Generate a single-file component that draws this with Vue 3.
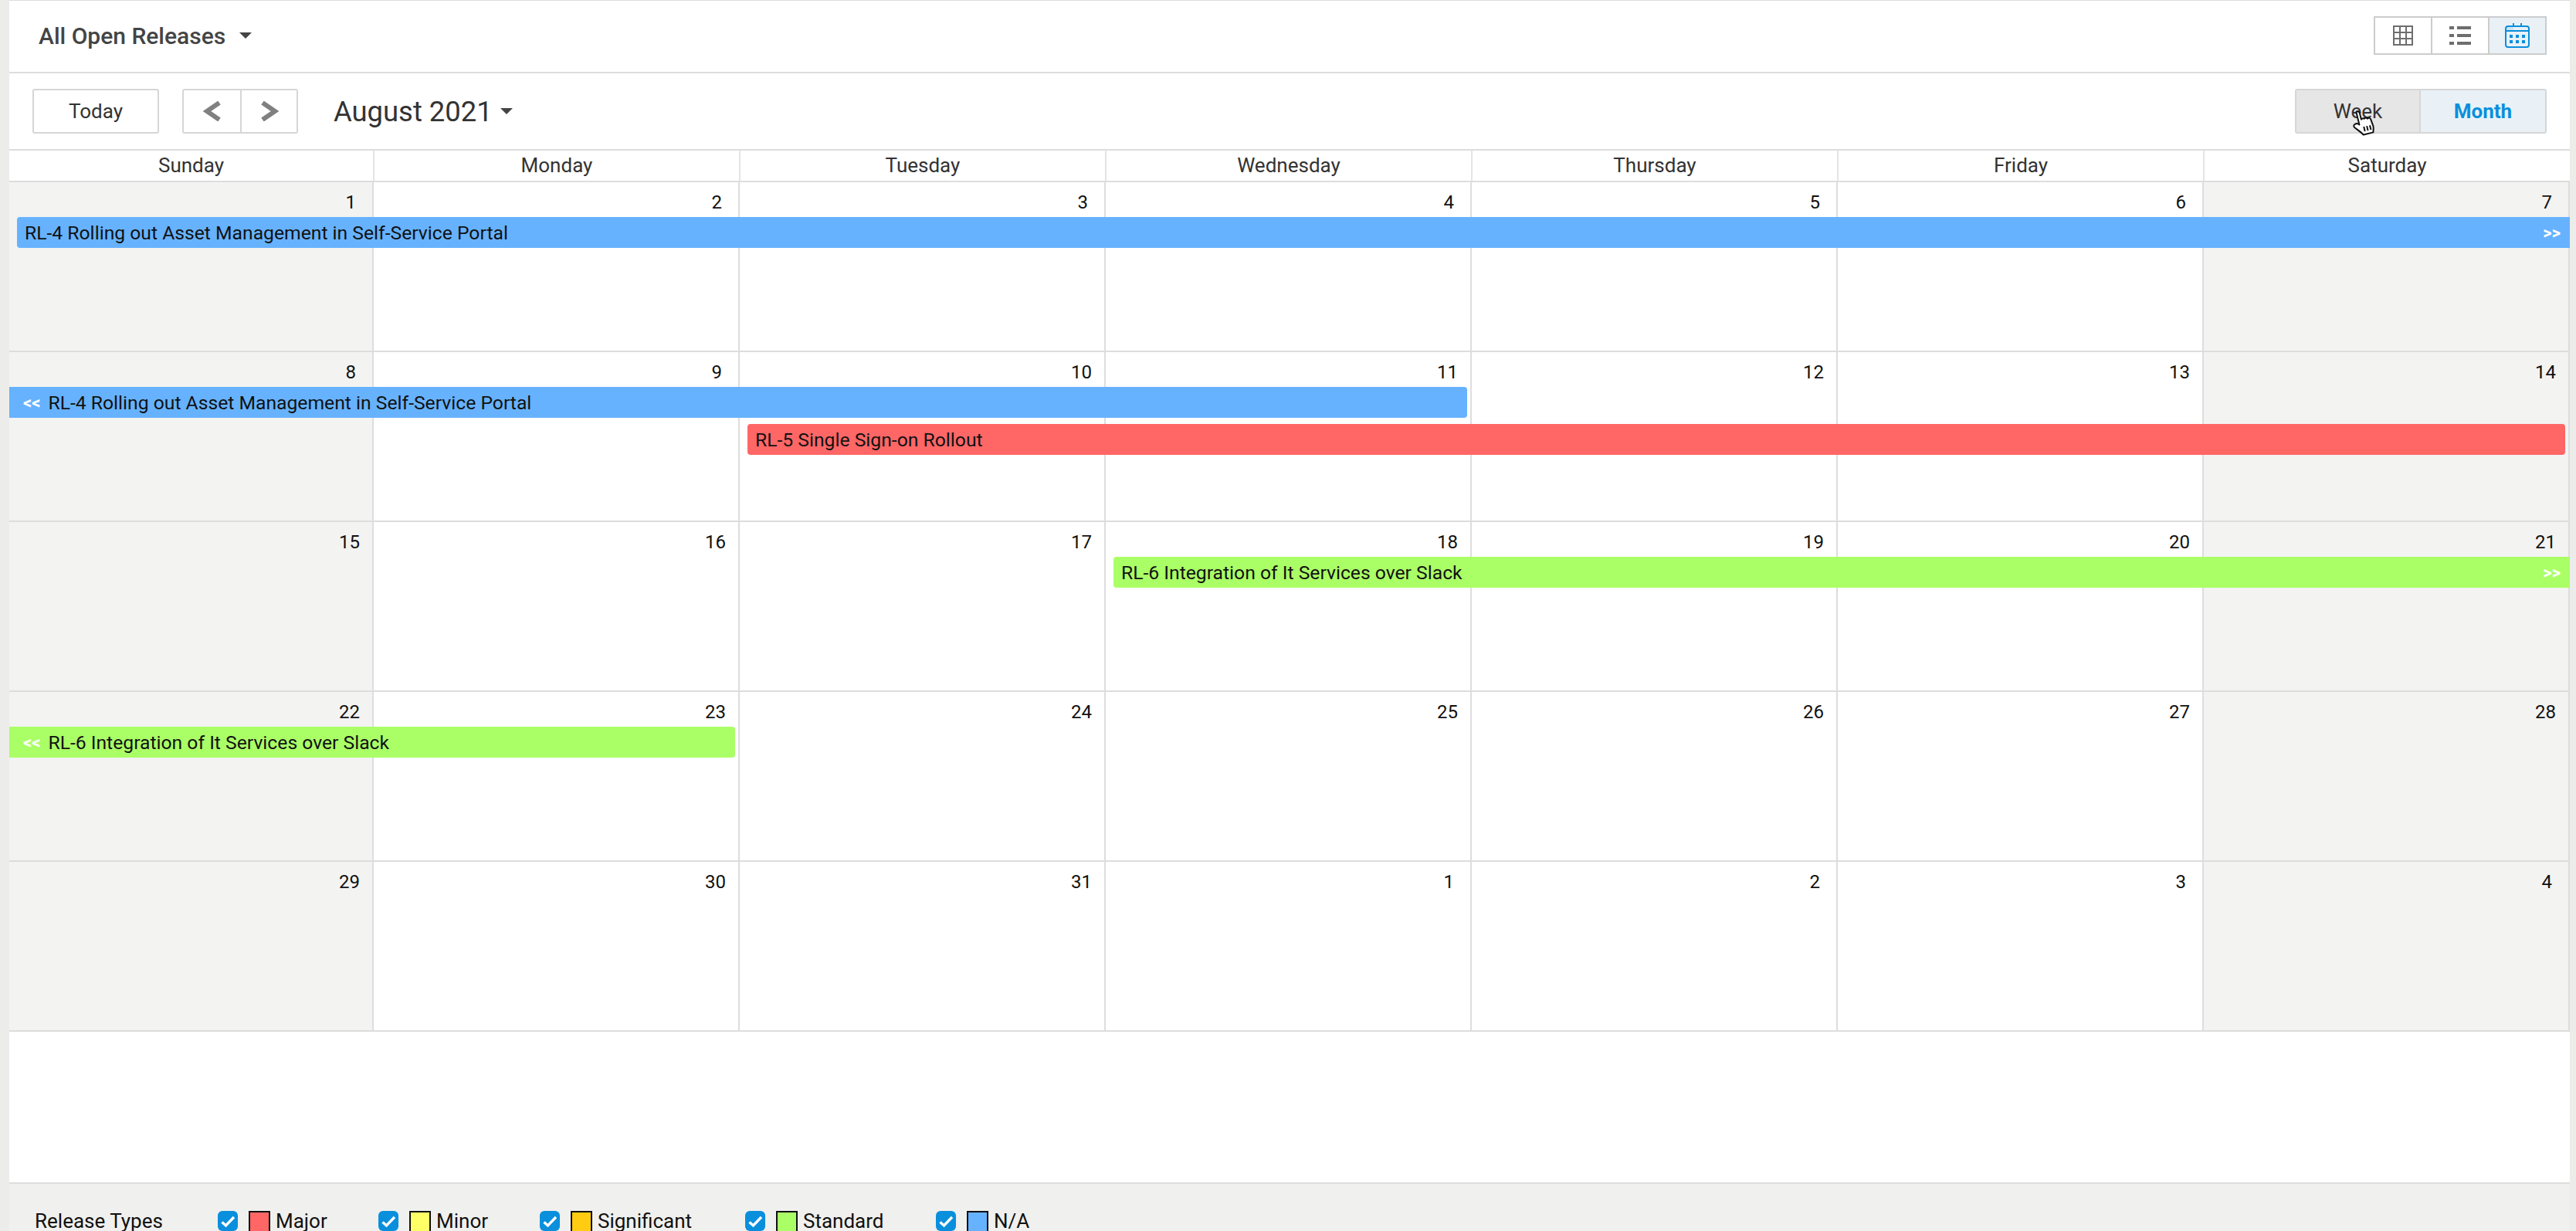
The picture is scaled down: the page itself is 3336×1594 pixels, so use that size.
<script setup>
const days = ['Sunday', 'Monday', 'Tuesday', 'Wednesday', 'Thursday', 'Friday', 'Saturday']

const BLUE = '#66b2ff'
const RED = '#ff6666'
const GREEN = '#aaff66'

const RL4 = 'RL-4 Rolling out Asset Management in Self-Service Portal'
const RL5 = 'RL-5 Single Sign-on Rollout'
const RL6 = 'RL-6 Integration of It Services over Slack'

const weeks = [
  {
    dates: [1, 2, 3, 4, 5, 6, 7],
    events: [{ title: RL4, color: BLUE, from: 1, to: 8, row: 2, kind: 'open-end' }]
  },
  {
    dates: [8, 9, 10, 11, 12, 13, 14],
    events: [
      { title: RL4, color: BLUE, from: 1, to: 5, row: 2, kind: 'open-start' },
      { title: RL5, color: RED, from: 3, to: 8, row: 3, kind: 'closed' }
    ]
  },
  {
    dates: [15, 16, 17, 18, 19, 20, 21],
    events: [{ title: RL6, color: GREEN, from: 4, to: 8, row: 2, kind: 'open-end' }]
  },
  {
    dates: [22, 23, 24, 25, 26, 27, 28],
    events: [{ title: RL6, color: GREEN, from: 1, to: 3, row: 2, kind: 'open-start' }]
  },
  { dates: [29, 30, 31, 1, 2, 3, 4], events: [] }
]

const legend = [
  { label: 'Major', color: '#ff6666', width: 208 },
  { label: 'Minor', color: '#ffff66', width: 209 },
  { label: 'Significant', color: '#ffcc11', width: 266 },
  { label: 'Standard', color: '#aaff66', width: 247 },
  { label: 'N/A', color: '#66b2ff', width: 120 }
]
</script>

<template>
  <div class="page">
    <header class="topbar">
      <div class="filter">
        <span>All Open Releases</span>
        <i class="caret small"></i>
      </div>
      <div class="view-switch">
        <button class="view-btn">
          <svg width="26" height="26" viewBox="0 0 26 26" fill="none" stroke="#6e6e6e" stroke-width="2">
            <rect x="1" y="1" width="24" height="24" />
            <path d="M9 1v24M17 1v24M1 9h24M1 17h24" />
          </svg>
        </button>
        <button class="view-btn">
          <svg width="28" height="24" viewBox="0 0 28 24" fill="#6e6e6e">
            <rect x="0" y="0" width="6" height="4" />
            <rect x="10" y="0" width="18" height="4" />
            <rect x="0" y="10" width="6" height="4" />
            <rect x="10" y="10" width="18" height="4" />
            <rect x="0" y="20" width="6" height="4" />
            <rect x="10" y="20" width="18" height="4" />
          </svg>
        </button>
        <button class="view-btn active">
          <svg width="32" height="32" viewBox="0 0 32 32" fill="none">
            <rect x="1" y="5" width="10" height="5" fill="#cfe4f4" />
            <rect x="1" y="4" width="30" height="27" rx="3" stroke="#0a8fdc" stroke-width="2" />
            <path d="M1 10h30" stroke="#0a8fdc" stroke-width="2" />
            <path d="M11 0v5M21 0v5" stroke="#0a8fdc" stroke-width="2" />
            <g fill="#0a8fdc">
              <rect x="6" y="15" width="4" height="4" />
              <rect x="14" y="15" width="4" height="4" />
              <rect x="22" y="15" width="4" height="4" />
              <rect x="6" y="22" width="4" height="4" />
              <rect x="14" y="22" width="4" height="4" />
              <rect x="22" y="22" width="4" height="4" />
            </g>
          </svg>
        </button>
      </div>
    </header>

    <div class="navbar">
      <button class="today">Today</button>
      <div class="arrows">
        <button class="arrow">
          <svg width="24" height="26" viewBox="0 0 24 26" fill="none" stroke="#808080" stroke-width="6">
            <path d="M21 2 5 13l16 11" />
          </svg>
        </button>
        <button class="arrow">
          <svg width="24" height="26" viewBox="0 0 24 26" fill="none" stroke="#808080" stroke-width="6">
            <path d="M3 2l16 11L3 24" />
          </svg>
        </button>
      </div>
      <div class="month-title">
        <span>August 2021</span>
        <i class="caret"></i>
      </div>
      <div class="range">
        <button class="range-btn week">
          Week
          <svg class="hand" width="32" height="36" viewBox="0 0 30 36">
            <g transform="rotate(-14 15 18)">
              <path
                d="M9 2c2-1 4 0 4 3v8c1-1 3-1 4 0 1-1 3-1 4 1 2-1 4 0 4 2l1 9c0 3-1 5-2 8H11c-2-4-5-7-9-12-1-2 0-4 2-4 2-1 3 0 5 2V5c0-1 0-2 0-3z"
                fill="#fff"
                stroke="#111"
                stroke-width="2"
                stroke-linejoin="round"
              />
              <path d="M14 23v6M18 23v6M22 23v6" stroke="#111" stroke-width="2" fill="none" />
            </g>
          </svg>
        </button>
        <button class="range-btn month">Month</button>
      </div>
    </div>

    <div class="day-head">
      <div v-for="day in days" :key="day" class="day-name">{{ day }}</div>
    </div>

    <div class="weeks">
      <div v-for="(week, w) in weeks" :key="w" class="week-row">
        <div
          v-for="(date, d) in week.dates"
          :key="d"
          class="cell"
          :class="{ weekend: d === 0 || d === 6, wide: date > 9 }"
          :style="{ gridColumn: d + 1 }"
        >
          {{ date }}
        </div>
        <div
          v-for="event in week.events"
          :key="event.title"
          class="bar"
          :class="event.kind"
          :style="{ gridColumn: event.from + ' / ' + event.to, gridRow: event.row, background: event.color }"
        >
          <span v-if="event.kind === 'open-start'" class="more">&lt;&lt;</span>
          <span class="bar-title">{{ event.title }}</span>
          <span v-if="event.kind === 'open-end'" class="more end">&gt;&gt;</span>
        </div>
      </div>
    </div>

    <footer class="legend">
      <span class="legend-title">Release Types</span>
      <label v-for="item in legend" :key="item.label" class="legend-item" :style="{ width: item.width + 'px' }">
        <span class="check">
          <svg width="26" height="26" viewBox="0 0 26 26" fill="none" stroke="#fff" stroke-width="3.4">
            <path d="M5.5 14.5l5 4.5L21 8" />
          </svg>
        </span>
        <span class="swatch" :style="{ background: item.color }"></span>
        <span class="legend-label">{{ item.label }}</span>
      </label>
    </footer>
  </div>
</template>

<style>
html,
body {
  margin: 0;
  overflow: hidden;
  background: #ececea;
}
</style>

<style scoped>
.page {
  width: 3316px;
  height: 1594px;
  margin-left: 12px;
  background: #fff;
  font-family: Roboto, sans-serif;
  color: #333;
  display: flex;
  flex-direction: column;
  overflow: hidden;
}

button {
  font-family: inherit;
  cursor: pointer;
  padding: 0;
}

.topbar {
  height: 95px;
  box-sizing: border-box;
  border-top: 1px solid #ddd;
  border-bottom: 2px solid #ddd;
  display: flex;
  align-items: center;
  justify-content: space-between;
  padding: 0 30px 2px 38px;
}

.filter {
  display: flex;
  align-items: center;
  gap: 18px;
  font-size: 30px;
  font-weight: 500;
  color: #444;
}

.caret {
  display: inline-block;
  width: 0;
  height: 0;
  border-left: 8px solid transparent;
  border-right: 8px solid transparent;
  border-top: 8px solid #444;
}

.view-switch {
  display: flex;
  width: 224px;
  height: 50px;
  box-sizing: border-box;
  border: 2px solid #ccc;
}

.view-btn {
  flex: 1;
  border: 0;
  border-right: 2px solid #ccc;
  background: #fff;
  display: flex;
  align-items: center;
  justify-content: center;
}

.view-btn:last-child {
  border-right: 0;
}

.view-btn.active {
  background: #e9f1f7;
}

.navbar {
  height: 98px;
  display: flex;
  align-items: center;
  padding: 0 30px;
  flex-shrink: 0;
}

.today {
  width: 164px;
  height: 58px;
  background: #fff;
  border: 2px solid #d6d6d6;
  border-radius: 3px;
  font-size: 26px;
  color: #333;
}

.arrows {
  display: flex;
  margin-left: 30px;
  height: 58px;
  box-sizing: border-box;
  border: 2px solid #d6d6d6;
  border-radius: 3px;
}

.arrow {
  width: 73px;
  border: 0;
  background: #fff;
  display: flex;
  align-items: center;
  justify-content: center;
}

.arrow + .arrow {
  border-left: 2px solid #d6d6d6;
}

.month-title {
  display: flex;
  align-items: center;
  gap: 10px;
  margin-left: 46px;
  font-size: 36.4px;
  color: #333;
}

.range {
  display: flex;
  margin-left: auto;
  height: 58px;
  box-sizing: border-box;
  border: 2px solid #d6d6d6;
  border-radius: 3px;
}

.range-btn {
  position: relative;
  width: 161px;
  border: 0;
  font-size: 26px;
}

.range-btn.week {
  background: #e6e6e6;
  color: #333;
  border-right: 2px solid #d6d6d6;
}

.range-btn.month {
  background: #e9f1f7;
  color: #0a8fdc;
  font-weight: 700;
}

.hand {
  position: absolute;
  left: 71px;
  top: 24px;
}

.day-head {
  display: grid;
  grid-template-columns: 473px repeat(5, 474px) 1fr;
  height: 43px;
  box-sizing: border-box;
  border-top: 2px solid #ddd;
  border-bottom: 2px solid #ddd;
  flex-shrink: 0;
}

.day-name {
  border-right: 2px solid #e4e4e4;
  text-align: center;
  font-size: 26px;
  line-height: 39px;
  color: #333;
}

.day-name:last-child {
  border-right: 0;
}

.week-row {
  display: grid;
  grid-template-columns: 472px repeat(5, 474px) 1fr;
  grid-template-rows: 45px 40px 40px 1fr;
  height: 220px;
  box-sizing: border-box;
  border-bottom: 2px solid #ddd;
}

.cell {
  grid-row: 1 / -1;
  border-right: 2px solid #ddd;
  text-align: right;
  padding: 12px 21px 0 0;
  font-size: 24px;
  line-height: 28px;
  color: #111;
}

.cell.wide {
  padding-right: 16px;
}

.cell.weekend {
  background: #f3f3f2;
}

.bar {
  display: flex;
  align-items: center;
  height: 40px;
  font-size: 24.7px;
  color: #111;
  white-space: nowrap;
  min-width: 0;
  overflow: hidden;
}

.bar + .bar {
  margin-top: 8px;
}

.bar.open-end {
  margin-left: 10px;
  border-radius: 4px 0 0 4px;
  padding: 0 12px 0 10px;
}

.bar.open-start {
  margin-right: 6px;
  border-radius: 0 4px 4px 0;
  padding-left: 18px;
}

.bar.closed {
  margin-left: 10px;
  margin-right: 6px;
  border-radius: 4px;
  padding-left: 10px;
}

.more {
  color: #fff;
  font-size: 22px;
  font-weight: 700;
  margin-right: 10px;
}

.more.end {
  margin-left: auto;
  margin-right: 0;
}

.legend {
  margin-top: auto;
  height: 63px;
  box-sizing: border-box;
  border-top: 2px solid #ddd;
  background: #f0f0ee;
  display: flex;
  align-items: flex-start;
  padding: 35px 0 0 33px;
  color: #111;
  font-size: 26px;
  flex-shrink: 0;
}

.legend-title {
  width: 237px;
  line-height: 26px;
}

.legend-item {
  display: flex;
  align-items: flex-start;
}

.check {
  width: 26px;
  height: 26px;
  border-radius: 6px;
  background: #0a8fdc;
  display: flex;
  flex-shrink: 0;
}

.swatch {
  width: 28px;
  height: 28px;
  margin-left: 14px;
  box-sizing: border-box;
  border: 2px solid #111;
  flex-shrink: 0;
}

.legend-label {
  margin-left: 7px;
  line-height: 26px;
}
</style>
